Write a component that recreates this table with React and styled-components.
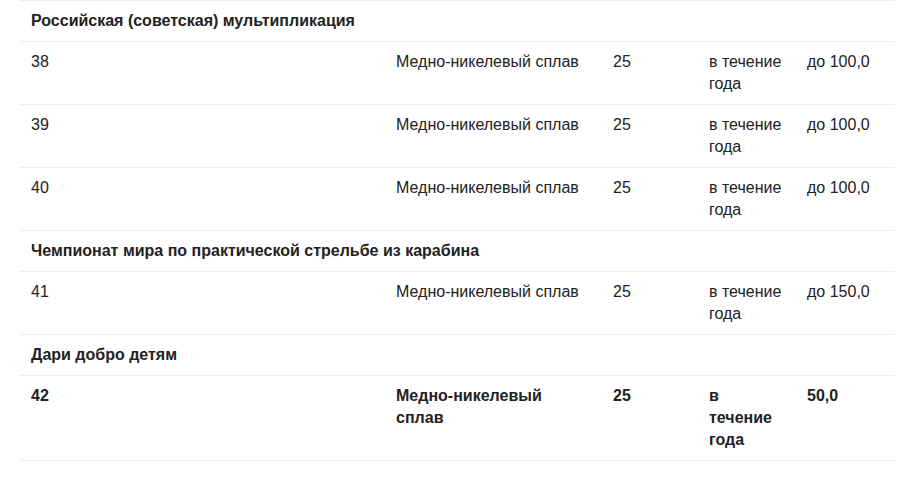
import React from 'react';
import styled, { createGlobalStyle } from 'styled-components';

const GlobalStyle = createGlobalStyle`
  body {
    margin: 0;
    background: #fff;
    font-family: "Liberation Sans", Arial, sans-serif;
    color: #222;
  }
`;

const Page = styled.div`
  padding: 0 11px 0 20px;
`;

const Table = styled.div`
  width: 875px;
  border-bottom: 1px solid #eeeeee;
`;

const Row = styled.div`
  display: grid;
  grid-template-columns: 365px 217px 96px 98px 99px;
  border-top: 1px solid #eeeeee;
  font-weight: ${p => (p.$bold ? 700 : 400)};
`;

const Section = styled.div`
  border-top: 1px solid #eeeeee;
  padding: 9px 11px;
  font-size: 16px;
  line-height: 22px;
  font-weight: 700;
`;

const Cell = styled.div`
  padding: 9px 11px;
  font-size: 16px;
  line-height: 22px;
`;

const groups = [
  {
    title: 'Российская (советская) мультипликация',
    rows: [
      ['38', 'Медно-никелевый сплав', '25', 'в течение года', 'до 100,0'],
      ['39', 'Медно-никелевый сплав', '25', 'в течение года', 'до 100,0'],
      ['40', 'Медно-никелевый сплав', '25', 'в течение года', 'до 100,0'],
    ],
  },
  {
    title: 'Чемпионат мира по практической стрельбе из карабина',
    rows: [['41', 'Медно-никелевый сплав', '25', 'в течение года', 'до 150,0']],
  },
  {
    title: 'Дари добро детям',
    bold: true,
    rows: [['42', 'Медно-никелевый сплав', '25', 'в течение года', '50,0']],
  },
];

export default function App() {
  return (
    <Page>
      <GlobalStyle />
      <Table>
        {groups.map(g => (
          <React.Fragment key={g.title}>
            <Section>{g.title}</Section>
            {g.rows.map(r => (
              <Row key={r[0]} $bold={g.bold}>
                {r.map((c, i) => (
                  <Cell key={i}>{c}</Cell>
                ))}
              </Row>
            ))}
          </React.Fragment>
        ))}
      </Table>
    </Page>
  );
}
